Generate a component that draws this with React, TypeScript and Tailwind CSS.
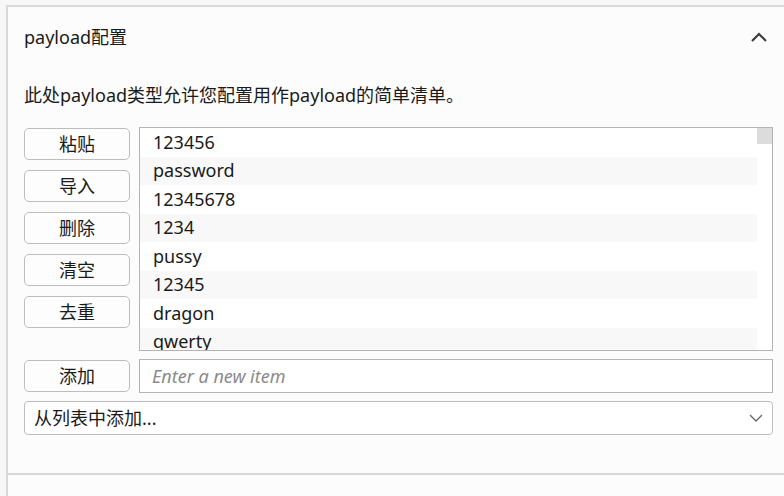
import React from 'react';

const items = ['123456', 'password', '12345678', '1234', 'pussy', '12345', 'dragon', 'qwerty', '111111', 'baseball'];
const actions = ['粘贴', '导入', '删除', '清空', '去重'];

const font = { fontFamily: '"Noto Sans", "Noto Sans CJK SC", sans-serif' };

function Btn({ label }: { label: string }) {
  return (
    <button className="h-[32px] w-[106px] rounded-[5px] border border-[#bdbdbd] bg-[#fdfdfd] text-[18px] text-[#1a1a1a] leading-none">
      {label}
    </button>
  );
}

export default function App() {
  return (
    <div className="h-[496px] w-[784px] overflow-hidden bg-[#f7f7f7] pt-[5px] pl-[6px]" style={font}>
      <div className="border-l-2 border-t-2 border-[#d8d8d8] bg-[#fcfcfc] h-[500px]">
        <div className="border-b-2 border-[#d8d8d8] pl-[16px] pr-[11px]">
          <div className="flex h-[60px] items-center justify-between">
            <span className="text-[18px] text-[#1a1a1a]">payload配置</span>
            <svg width="18" height="12" viewBox="0 0 18 12" className="mr-[5px]">
              <path d="M2 10 L9 3 L16 10" fill="none" stroke="#3c3c3c" strokeWidth="2.2" />
            </svg>
          </div>
          <p className="mt-[16px] text-[18px] leading-[24px] text-[#1a1a1a]">
            此处payload类型允许您配置用作payload的简单清单。
          </p>
          <div className="mt-[20px] flex gap-[9px]">
            <div className="flex flex-col gap-[10px] pt-[1px]">
              {actions.map((a) => (
                <Btn key={a} label={a} />
              ))}
            </div>
            <div className="flex h-[224px] flex-1 border border-[#b4b4b4] bg-white">
              <div className="flex-1 overflow-hidden">
                {items.map((it, i) => (
                  <div
                    key={it}
                    className={`flex h-[28.5px] items-center pl-[13px] text-[18px] text-[#1a1a1a] ${i % 2 ? 'bg-[#f8f8f8]' : 'bg-white'}`}
                  >
                    {it}
                  </div>
                ))}
              </div>
              <div className="w-[15px] bg-white">
                <div className="h-[16px] bg-[#dcdcdc]" />
              </div>
            </div>
          </div>
          <div className="mt-[8px] flex items-center gap-[9px]">
            <Btn label="添加" />
            <input
              placeholder="Enter a new item"
              className="h-[34px] flex-1 border border-[#b4b4b4] bg-white pl-[12px] text-[18px] italic placeholder:text-[#8a8a8a] outline-none"
            />
          </div>
          <div className="mt-[8px] mb-[38px] flex h-[34px] items-center justify-between rounded-[4px] border border-[#bdbdbd] bg-white pl-[9px] pr-[8px]">
            <span className="text-[18px] text-[#1a1a1a]">从列表中添加...</span>
            <svg width="16" height="10" viewBox="0 0 16 10">
              <path d="M2 2 L8 8 L14 2" fill="none" stroke="#666" strokeWidth="1.3" />
            </svg>
          </div>
        </div>
      </div>
    </div>
  );
}
